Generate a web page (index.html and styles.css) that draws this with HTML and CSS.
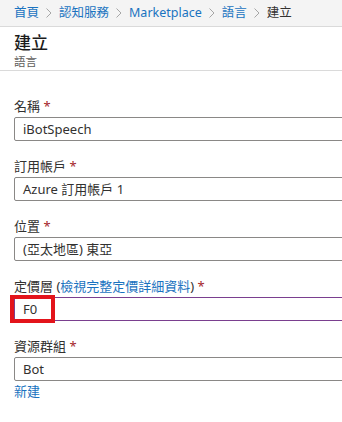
FILE: index.html
```html
<!DOCTYPE html>
<html>

<head>
  <title>建立 - 語言</title>
  <link rel="stylesheet" href="styles.css">
</head>

<body>
  <!-- Breadcrumb bar -->
  <nav class="breadcrumb">
    <a href="#">首頁</a>
    <svg class="chevron" width="6" height="10" viewBox="0 0 6 10"><polyline points="0.5,0.5 5,5 0.5,9.5" /></svg>
    <a href="#">認知服務</a>
    <svg class="chevron" width="6" height="10" viewBox="0 0 6 10"><polyline points="0.5,0.5 5,5 0.5,9.5" /></svg>
    <a href="#">Marketplace</a>
    <svg class="chevron" width="6" height="10" viewBox="0 0 6 10"><polyline points="0.5,0.5 5,5 0.5,9.5" /></svg>
    <a href="#">語言</a>
    <svg class="chevron" width="6" height="10" viewBox="0 0 6 10"><polyline points="0.5,0.5 5,5 0.5,9.5" /></svg>
    <span class="current">建立</span>
  </nav>

  <!-- Blade header -->
  <header class="blade-header">
    <h1 class="blade-title">建立</h1>
    <div class="blade-subtitle">語言</div>
  </header>

  <!-- Create form -->
  <form class="create-form">
    <div class="field">
      <label class="field-label">名稱 <span class="required">*</span></label>
      <input class="field-input" type="text" value="iBotSpeech">
    </div>

    <div class="field">
      <label class="field-label">訂用帳戶 <span class="required">*</span></label>
      <div class="field-input">Azure 訂用帳戶 1</div>
    </div>

    <div class="field">
      <label class="field-label">位置 <span class="required">*</span></label>
      <div class="field-input">(亞太地區) 東亞</div>
    </div>

    <div class="field">
      <label class="field-label">定價層 (<a href="#">檢視完整定價詳細資料</a>) <span class="required">*</span></label>
      <div class="field-input focused">
        F0
        <span class="highlight"></span>
      </div>
    </div>

    <div class="field">
      <label class="field-label">資源群組 <span class="required">*</span></label>
      <div class="field-input">Bot</div>
      <a class="create-new" href="#">新建</a>
    </div>
  </form>
</body>

</html>
```

FILE: styles.css
```css
/* Reset default margin and keep the wide inputs clipped at the edge */
html,
body {
  overflow: hidden;
}

body {
  margin: 0;
  padding: 0;
  font-family: 'Noto Sans', 'Noto Sans CJK TC', sans-serif;
  font-size: 13px;
  color: #323130;
  background-color: #fff;
}

a {
  color: #1a73c0;
  text-decoration: none;
}

/* Breadcrumb bar */
.breadcrumb {
  display: flex;
  align-items: center;
  gap: 7px;
  height: 26px;
  padding: 0 14px;
  font-size: 12.5px;
  background-color: #f4f4f4;
  border-bottom: 1px solid #dadada;
  white-space: nowrap;
  line-height: 26px;
}

.breadcrumb .current {
  color: #323130;
}

.chevron {
  flex: none;
}

.chevron polyline {
  fill: none;
  stroke: #a6a6a6;
  stroke-width: 1;
}

/* Blade header */
.blade-header {
  padding: 6px 14px 2px;
  border-bottom: 1px solid #dadada;
}

.blade-title {
  margin: 0;
  font-size: 17px;
  font-weight: 500;
  line-height: 20px;
  color: #1b1b1b;
}

.blade-subtitle {
  margin-top: 2px;
  font-size: 11.5px;
  line-height: 13px;
  color: #605e5c;
}

/* Form */
.create-form {
  padding: 27px 14px 0;
}

.field {
  margin-bottom: 17px;
}

.field-label {
  display: block;
  line-height: 16px;
  margin-bottom: 3px;
}

.required {
  color: #a4262c;
}

.field-input {
  position: relative;
  box-sizing: border-box;
  display: block;
  width: 360px;
  height: 24px;
  padding: 0 8px;
  border: 1px solid #8a8886;
  border-radius: 2px;
  font-family: inherit;
  font-size: 13px;
  line-height: 22px;
  color: #323130;
  background-color: #fff;
}

.field-input.focused {
  border-color: #7a3f8f;
}

/* Red annotation box over the pricing tier */
.highlight {
  position: absolute;
  left: -5px;
  top: -3px;
  width: 37px;
  height: 20px;
  border: 4px solid #e3141b;
}

.create-new {
  display: block;
  line-height: 16px;
  margin-top: 2px;
}
```
